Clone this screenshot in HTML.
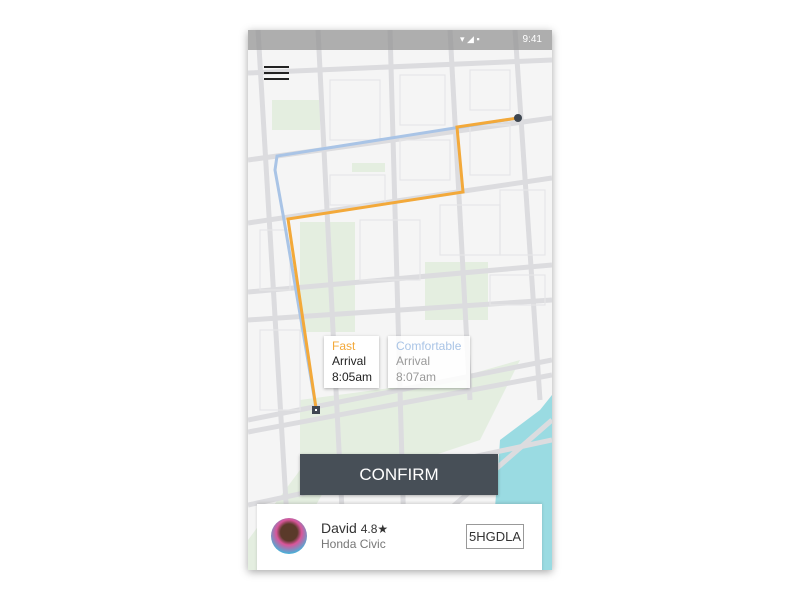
<!DOCTYPE html>
<html><head><style>
body{margin:0;width:800px;height:600px;background:#fff;position:relative;overflow:hidden;font-family:"Liberation Sans",sans-serif}
.phone{position:absolute;left:248px;top:30px;width:304px;height:540px;overflow:hidden;box-shadow:0 2px 8px rgba(0,0,0,.35);background:#f4f4f4}
.status{position:absolute;left:0;top:0;width:304px;height:20px;background:rgba(150,150,150,.75);color:#fff;font-size:10px}
.tip{position:absolute;background:#fff;box-shadow:0 1px 3px rgba(0,0,0,.3);padding:3px 8px;font-size:12px;line-height:14px}
</style></head><body>
<div class="phone">
<svg width="304" height="540" viewBox="248 30 304 540" style="position:absolute;left:0;top:0">
<rect x="248" y="30" width="304" height="540" fill="#f5f5f5"/>
<g fill="#e4eee0">
<rect x="272" y="100" width="48" height="30"/><rect x="352" y="163" width="33" height="9"/>
<rect x="300" y="222" width="55" height="110"/><rect x="425" y="262" width="63" height="58"/>
<polygon points="300,400 450,380 520,360 480,440 420,460 300,470"/>
<polygon points="248,540 300,470 330,480 280,570 248,570"/>
</g>
<polygon points="552,395 540,410 500,440 498,470 490,570 552,570" fill="#9adbe2"/>
<g stroke="#dcdcdf" stroke-width="5" fill="none">
<line x1="248" y1="73" x2="552" y2="60"/><line x1="248" y1="160" x2="552" y2="118"/>
<line x1="248" y1="223" x2="552" y2="178"/><line x1="248" y1="292" x2="552" y2="265"/>
<line x1="248" y1="320" x2="552" y2="300"/><line x1="248" y1="420" x2="552" y2="360"/>
<line x1="248" y1="432" x2="552" y2="375"/><line x1="248" y1="505" x2="552" y2="440"/>
<line x1="258" y1="30" x2="290" y2="570"/><line x1="318" y1="30" x2="345" y2="570"/>
<line x1="390" y1="30" x2="405" y2="570"/><line x1="450" y1="30" x2="470" y2="400"/>
<line x1="515" y1="30" x2="540" y2="400"/><line x1="380" y1="570" x2="552" y2="420"/>
</g>
<g stroke="#e6e6e8" stroke-width="1.2" fill="none">
<rect x="330" y="80" width="50" height="60"/><rect x="400" y="75" width="45" height="50"/>
<rect x="470" y="70" width="40" height="40"/><rect x="400" y="140" width="50" height="40"/>
<rect x="330" y="175" width="55" height="30"/><rect x="470" y="125" width="40" height="50"/>
<rect x="360" y="220" width="60" height="60"/><rect x="440" y="205" width="60" height="50"/>
<rect x="500" y="190" width="45" height="65"/><rect x="260" y="230" width="30" height="60"/>
<rect x="260" y="330" width="40" height="80"/><rect x="490" y="275" width="55" height="30"/>
</g>
<polyline points="518,118 277,156 275,170 284,220 316,408" stroke="#a9c4e6" stroke-width="3" fill="none"/>
<polyline points="518,118 457,127 463,192 288,219 316,408" stroke="#f3a93a" stroke-width="3" fill="none"/>
<circle cx="518" cy="118" r="4" fill="#3e4650"/>
<rect x="312" y="406" width="8" height="8" fill="#3e4650"/><rect x="315" y="409" width="2" height="2" fill="#fff"/>
</svg>
<div class="status"><span style="position:absolute;right:10px;top:4px">9:41</span>
<span style="position:absolute;left:212px;top:4px;font-size:9px">▾ ◢ ▪</span></div>
<div style="position:absolute;left:16px;top:36px;width:25px;height:2px;background:#222;box-shadow:0 6px 0 #222,0 12px 0 #222"></div>
<div class="tip" style="left:76px;top:306px;width:39px"><span style="color:#f3a93a">Fast</span><br><span style="color:#222;line-height:16px">Arrival<br>8:05am</span></div>
<div class="tip" style="left:140px;top:306px;width:66px;background:rgba(255,255,255,.85)"><span style="color:#a9c4e6">Comfortable</span><br><span style="color:#999;line-height:16px">Arrival<br>8:07am</span></div>
<div style="position:absolute;left:52px;top:424px;width:198px;height:41px;background:#474f57;color:#fff;font-size:17px;text-align:center;line-height:41px;box-shadow:0 1px 3px rgba(0,0,0,.3)">CONFIRM</div>
<div style="position:absolute;left:9px;top:474px;width:285px;height:70px;background:#fff;box-shadow:0 -1px 3px rgba(0,0,0,.15)">
<div style="position:absolute;left:14px;top:14px;width:36px;height:36px;border-radius:50%;background:radial-gradient(circle at 50% 40%,#5a3a2a 30%,#d9559a 45%,#4ab0d8 75%)"></div>
<div style="position:absolute;left:64px;top:16px;font-size:14px;color:#333">David <span style="font-size:12px">4.8★</span></div>
<div style="position:absolute;left:64px;top:33px;font-size:12px;color:#777">Honda Civic</div>
<div style="position:absolute;left:209px;top:20px;width:56px;height:23px;border:1px solid #999;font-size:13px;color:#333;text-align:center;line-height:23px">5HGDLA</div>
</div>
</div>
</body></html>
